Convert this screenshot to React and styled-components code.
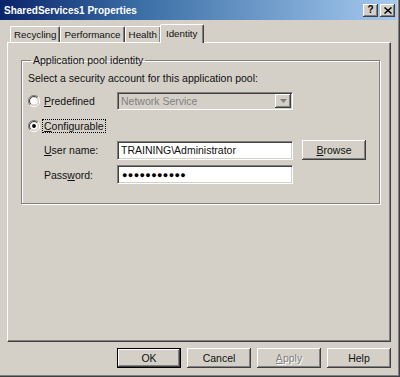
import React from "react";
import styled, { createGlobalStyle } from "styled-components";

const Global = createGlobalStyle`
  html, body { margin: 0; padding: 0; background: #D4D0C8; }
  body {
    font-family: Tahoma, "Liberation Sans", Arial, sans-serif;
    font-size: 10.5px;
    color: #111;
  }
`;

const Window = styled.div`
  width: 400px;
  height: 377px;
  box-sizing: border-box;
  background: #D4D0C8;
  display: flex;
  flex-direction: column;
  border-right: 1px solid #404040;
  border-bottom: 1px solid #404040;
  box-shadow: inset -1px -1px 0 #808080;
  overflow: hidden;
`;

const TitleBar = styled.div`
  flex: none;
  height: 20px;
  margin-right: 2px;
  background: linear-gradient(to right, #0A246A 0%, #3A6EA5 35%, #A6CAF0 100%);
  display: flex;
  align-items: center;
  padding: 0 2px 0 4px;
  color: #fff;
  font-weight: bold;
  font-size: 10px;
`;

const Title = styled.span`
  flex: 1;
`;

const CaptionButton = styled.div`
  width: 15px;
  height: 13px;
  margin-left: ${p => p.$gap || 0}px;
  box-sizing: border-box;
  background: #D4D0C8;
  box-shadow: inset -1px -1px 0 #404040, inset 1px 1px 0 #fff, inset -2px -2px 0 #808080;
  display: flex;
  align-items: center;
  justify-content: center;
  color: #000;
  font-size: 10px;
  font-weight: bold;
  line-height: 1;
`;

const Body = styled.div`
  flex: 1;
  display: flex;
  flex-direction: column;
  padding: 4px 7px 0 7px;
`;

const TabStrip = styled.div`
  display: flex;
  align-items: flex-end;
  height: 18px;
  padding-left: 3px;
  position: relative;
  z-index: 1;
  font-size: 9.8px;
`;

const Tab = styled.div`
  height: ${p => (p.$active ? 19 : 16)}px;
  box-sizing: border-box;
  padding: ${p => (p.$active ? "0 5px 2px" : "0 3px")};
  margin: ${p => (p.$active ? "0 -2px -1px -1px" : "0")};
  background: #D4D0C8;
  border-top: 1px solid #fff;
  border-left: 1px solid #fff;
  border-right: 1px solid #404040;
  box-shadow: inset -1px 0 0 #808080;
  border-radius: 2px 2px 0 0;
  display: flex;
  align-items: center;
  position: relative;
  z-index: ${p => (p.$active ? 2 : 0)};
`;

const Panel = styled.div`
  height: 300px;
  box-sizing: border-box;
  margin-right: 1px;
  border-top: 1px solid #fff;
  border-left: 1px solid #fff;
  border-right: 1px solid #404040;
  border-bottom: 1px solid #404040;
  box-shadow: inset -1px -1px 0 #808080;
  padding: 11px 10px 0 13px;
`;

const GroupBox = styled.fieldset`
  margin: 0;
  height: 150px;
  box-sizing: border-box;
  border: 1px solid #808080;
  box-shadow: inset 1px 1px 0 #fff, 1px 1px 0 #fff;
  padding: 4px 6px 0 6px;
`;

const Legend = styled.legend`
  padding: 0 2px;
  margin-left: 3px;
`;

const Hint = styled.div`
  height: 14px;
  line-height: 14px;
  margin-top: 1px;
`;

const Row = styled.div`
  display: grid;
  grid-template-columns: 16px 73px 176px 9px 65px;
  align-items: center;
  margin-top: ${p => p.$mt}px;
  height: ${p => p.$h}px;
`;

const Radio = styled.span`
  width: 12px;
  height: 12px;
  display: block;
`;

const Label = styled.span`
  grid-column: ${p => p.$col || "auto"};
  white-space: nowrap;
`;

const Focus = styled.span`
  outline: 1px dotted #000;
  outline-offset: 0;
  padding: 0 1px;
  margin-left: -1px;
`;

const Field = styled.div`
  grid-column: 3;
  height: ${p => p.$h || 19}px;
  box-sizing: border-box;
  background: ${p => (p.$disabled ? "#D4D0C8" : "#fff")};
  border-top: 1px solid #808080;
  border-left: 1px solid #808080;
  border-right: 1px solid #fff;
  border-bottom: 1px solid #fff;
  box-shadow: inset 1px 1px 0 #404040, inset -1px -1px 0 #D4D0C8;
  display: flex;
  align-items: center;
  padding-left: 3px;
  color: ${p => (p.$disabled ? "#808080" : "#111")};
  overflow: hidden;
`;

const FieldText = styled.span`
  flex: 1;
`;

const Dots = styled.span`
  flex: 1;
  font-size: 9px;
  letter-spacing: 0.4px;
  padding-left: 1px;
  color: #000;
`;

const DropArrow = styled.div`
  width: 16px;
  height: 14px;
  margin-right: 1px;
  box-sizing: border-box;
  background: #D4D0C8;
  box-shadow: inset -1px -1px 0 #404040, inset 1px 1px 0 #fff, inset -2px -2px 0 #808080;
  display: flex;
  align-items: center;
  justify-content: center;
`;

const Button = styled.div`
  grid-column: ${p => p.$col || "auto"};
  width: 64px;
  height: 20px;
  box-sizing: border-box;
  background: #D4D0C8;
  border: ${p => (p.$default ? "1px solid #000" : "none")};
  box-shadow: inset -1px -1px 0 #404040, inset 1px 1px 0 #fff, inset -2px -2px 0 #808080;
  display: flex;
  align-items: center;
  justify-content: center;
  color: ${p => (p.$disabled ? "#808080" : "#111")};
  text-shadow: ${p => (p.$disabled ? "1px 1px 0 #fff" : "none")};
`;

const ButtonRow = styled.div`
  display: flex;
  justify-content: flex-end;
  gap: 6px;
  margin-top: 6px;
  padding-right: 1px;
`;

const U = styled.span`
  text-decoration: underline;
`;

function RadioIcon({ checked }) {
  return (
    <Radio>
      <svg width="12" height="12" viewBox="0 0 12 12">
        <path d="M2 10 A5.5 5.5 0 0 1 10 2" fill="none" stroke="#808080" />
        <path d="M2.8 9.2 A4.4 4.4 0 0 1 9.2 2.8" fill="none" stroke="#404040" />
        <path d="M10 2 A5.5 5.5 0 0 1 2 10" fill="none" stroke="#fff" />
        <path d="M9.2 2.8 A4.4 4.4 0 0 1 2.8 9.2" fill="none" stroke="#D4D0C8" />
        <circle cx="6" cy="6" r="3.6" fill="#fff" />
        {checked && <circle cx="6" cy="6" r="1.9" fill="#000" />}
      </svg>
    </Radio>
  );
}

export default function App() {
  return (
    <>
      <Global />
      <Window>
        <TitleBar>
          <Title>SharedServices1 Properties</Title>
          <CaptionButton>?</CaptionButton>
          <CaptionButton $gap={2}>
            <svg width="8" height="7" viewBox="0 0 8 7">
              <path d="M0.5 0.5 L7.5 6.5 M7.5 0.5 L0.5 6.5" stroke="#000" strokeWidth="1.5" />
            </svg>
          </CaptionButton>
        </TitleBar>
        <Body>
          <TabStrip>
            <Tab>Recycling</Tab>
            <Tab>Performance</Tab>
            <Tab>Health</Tab>
            <Tab $active>Identity</Tab>
          </TabStrip>
          <Panel>
            <GroupBox>
              <Legend>Application pool identity</Legend>
              <Hint>Select a security account for this application pool:</Hint>
              <Row $mt={7} $h={18}>
                <RadioIcon />
                <Label><U>P</U>redefined</Label>
                <Field $disabled $h={18}>
                  <FieldText>Network Service</FieldText>
                  <DropArrow>
                    <svg width="7" height="4" viewBox="0 0 7 4">
                      <path d="M0 0 H7 L3.5 4 Z" fill="#808080" />
                    </svg>
                  </DropArrow>
                </Field>
              </Row>
              <Row $mt={7} $h={18}>
                <RadioIcon checked />
                <Label><Focus><U>C</U>onfigurable</Focus></Label>
              </Row>
              <Row $mt={5} $h={20}>
                <Label $col={2}><U>U</U>ser name:</Label>
                <Field $h={19}>
                  <FieldText>TRAINING\Administrator</FieldText>
                </Field>
                <Button $col={5}><U>B</U>rowse</Button>
              </Row>
              <Row $mt={5} $h={19}>
                <Label $col={2}>Pass<U>w</U>ord:</Label>
                <Field $h={19}>
                  <Dots>●●●●●●●●●●●</Dots>
                </Field>
              </Row>
            </GroupBox>
          </Panel>
          <ButtonRow>
            <Button $default>OK</Button>
            <Button>Cancel</Button>
            <Button $disabled><U>A</U>pply</Button>
            <Button>Help</Button>
          </ButtonRow>
        </Body>
      </Window>
    </>
  );
}
